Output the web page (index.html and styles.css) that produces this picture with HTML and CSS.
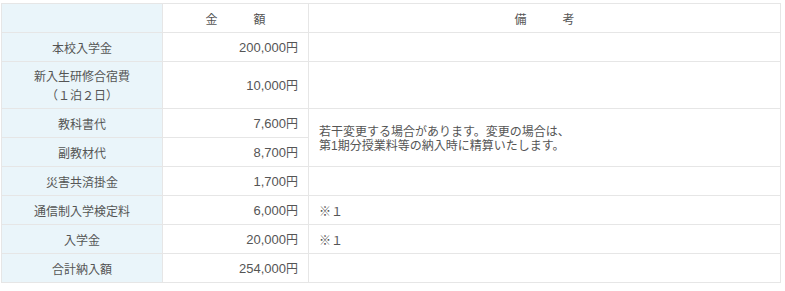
FILE: index.html
```html
<!DOCTYPE html>
<html lang="ja">
<head>
<meta charset="utf-8">
<link rel="stylesheet" href="styles.css">
</head>
<body>
<div class="wrap">
<table class="fee">
  <colgroup>
    <col class="c1"><col class="c2"><col class="c3">
  </colgroup>
  <thead>
    <tr>
      <th class="label"></th>
      <th class="head">金　　　額</th>
      <th class="head">備　　　考</th>
    </tr>
  </thead>
  <tbody>
    <tr><th class="label">本校入学金</th><td class="amt">200,000<span class="yen">円</span></td><td></td></tr>
    <tr class="tall"><th class="label">新入生研修合宿費<br>（１泊２日）</th><td class="amt">10,000<span class="yen">円</span></td><td></td></tr>
    <tr><th class="label">教科書代</th><td class="amt">7,600<span class="yen">円</span></td><td class="note" rowspan="2">若干変更する場合があります。変更の場合は、<br>第<span class="lat">1</span>期分授業料等の納入時に精算いたします。</td></tr>
    <tr><th class="label">副教材代</th><td class="amt">8,700<span class="yen">円</span></td></tr>
    <tr><th class="label">災害共済掛金</th><td class="amt">1,700<span class="yen">円</span></td><td></td></tr>
    <tr><th class="label">通信制入学検定料</th><td class="amt">6,000<span class="yen">円</span></td><td>※１</td></tr>
    <tr><th class="label">入学金</th><td class="amt">20,000<span class="yen">円</span></td><td>※１</td></tr>
    <tr><th class="label">合計納入額</th><td class="amt">254,000<span class="yen">円</span></td><td></td></tr>
  </tbody>
</table>
</div>
</body>
</html>
```
FILE: styles.css
```css
html, body {
  margin: 0;
  padding: 0;
  background: #fff;
}
.wrap {
  padding: 3px 0 0 1px;
}
.fee {
  border-collapse: collapse;
  table-layout: fixed;
  width: 779px;
  font-family: "Noto Sans CJK JP", sans-serif;
  font-size: 12px;
  color: #555;
}
.c1 { width: 161px; }
.c2 { width: 146px; }
.c3 { width: 472px; }
.fee th,
.fee td {
  border: 1px solid #e6e6e6;
  padding: 5px 10px 4px;
  line-height: 19px;
  font-weight: normal;
  vertical-align: middle;
  text-align: left;
}
.fee tr.tall th,
.fee tr.tall td {
  padding-top: 4px;
  padding-bottom: 4px;
}
.fee th.label {
  background: #eaf5fa;
  text-align: center;
  padding-left: 4px;
  padding-right: 4px;
}
.fee th.head {
  text-align: center;
}
.fee td.amt {
  text-align: right;
  font-family: "Liberation Sans", sans-serif;
  font-size: 13px;
}
.yen {
  font-family: "Noto Sans CJK JP", sans-serif;
  font-size: 12px;
  line-height: 1px;
}
.fee td.note {
  line-height: 14px;
}
.lat {
  font-family: "Liberation Sans", sans-serif;
  line-height: 1px;
}
```
